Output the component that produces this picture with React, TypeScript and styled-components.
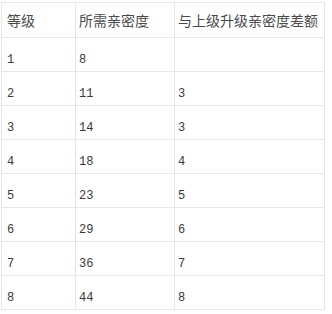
import React from "react";
import styled, { createGlobalStyle } from "styled-components";

const Global = createGlobalStyle`
  html, body { margin: 0; padding: 0; background: #ffffff; }
  body { font-family: "Noto Sans CJK SC", "Liberation Sans", sans-serif; }
`;

const Table = styled.div`
  display: grid;
  grid-template-columns: 74px 99px 150px;
  grid-auto-rows: 34px;
  grid-template-rows: 35px;
  margin: 2px 0 0 1px;
  width: max-content;
  border-left: 1px solid #e3e7ea;
  border-top: 1px solid #e3e7ea;
`;

const Cell = styled.div<{ $first?: boolean; $head?: boolean }>`
  border-right: 1px solid #e3e7ea;
  border-bottom: 1px solid #e3e7ea;
  padding-left: ${(p) => (p.$first ? "5px" : "3px")};
  display: flex;
  align-items: ${(p) => (p.$head ? "center" : "flex-start")};
  padding-top: ${(p) => (p.$head ? "0" : "16px")};
  box-sizing: border-box;
  color: #4a4a4a;
  font-size: 14px;
  line-height: 14px;
  white-space: nowrap;
  overflow: hidden;
`;

const Num = styled.span`
  font-family: "Liberation Mono", "DejaVu Sans Mono", monospace;
  font-size: 12px;
  line-height: 12px;
  color: #3a3a3a;
`;

const rows: [string, string, string][] = [
  ["1", "8", ""],
  ["2", "11", "3"],
  ["3", "14", "3"],
  ["4", "18", "4"],
  ["5", "23", "5"],
  ["6", "29", "6"],
  ["7", "36", "7"],
  ["8", "44", "8"],
];

export default function App() {
  return (
    <>
      <Global />
      <Table>
        <Cell $first $head>等级</Cell>
        <Cell $head>所需亲密度</Cell>
        <Cell $head>与上级升级亲密度差额</Cell>
        {rows.map((r) => (
          <React.Fragment key={r[0]}>
            <Cell $first><Num>{r[0]}</Num></Cell>
            <Cell><Num>{r[1]}</Num></Cell>
            <Cell><Num>{r[2]}</Num></Cell>
          </React.Fragment>
        ))}
      </Table>
    </>
  );
}
